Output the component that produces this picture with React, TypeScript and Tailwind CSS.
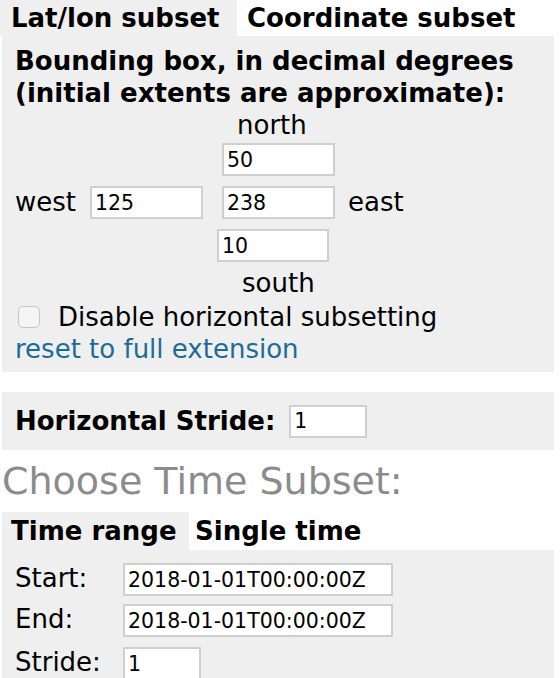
import React from 'react';

const inputCls =
  'h-[33px] border-2 border-[#cfcfcf] bg-white px-[3px] text-[20.5px] text-black outline-none font-["DejaVu_Sans",Verdana,sans-serif]';

function App() {
  return (
    <div className="min-h-[678px] bg-white text-black text-[26px] font-['DejaVu_Sans',Verdana,sans-serif]">
      {/* spatial tabs */}
      <div className="flex h-[36px]">
        <div className="flex h-[36px] w-[237px] items-center bg-[#efefef] pl-[11px] font-bold">Lat/lon subset</div>
        <div className="flex h-[36px] items-center pl-[10px] font-bold">Coordinate subset</div>
      </div>

      <div className="ml-[2px] flex h-[336px] w-[552px] flex-col bg-[#efefef]">
        <div className="px-[13px] pt-[9px] font-bold leading-[32px]">
          Bounding box, in decimal degrees
          <br />
          (initial extents are approximate):
        </div>

        <div className="pl-[235px] leading-[32px]">north</div>
        <div className="mt-[2px] flex pl-[220px]">
          <input className={`${inputCls} w-[113px]`} defaultValue="50" />
        </div>
        <div className="mt-[7px] flex items-center">
          <span className="w-[88px] pl-[13px]">west</span>
          <input className={`${inputCls} w-[113px]`} defaultValue="125" />
          <input className={`${inputCls} ml-[19px] w-[113px]`} defaultValue="238" />
          <span className="pl-[13px]">east</span>
        </div>
        <div className="mt-[7px] flex pl-[215px]">
          <input className={`${inputCls} w-[112px]`} defaultValue="10" />
        </div>
        <div className="mt-[5px] pl-[240px] leading-[32px]">south</div>
        <label className="mt-[2px] flex items-center pl-[16px] leading-[32px]">
          <span className="mr-[18px] inline-block h-[22px] w-[22px] rounded-[5px] border border-[#c6c6c6] bg-[#f5f5f5]" />
          Disable horizontal subsetting
        </label>
        <a href="#" className="block pl-[13px] leading-[32px] text-[#1b6c98]">
          reset to full extension
        </a>
      </div>

      <div className="ml-[2px] mt-[20px] flex h-[58px] w-[552px] items-center bg-[#efefef] pl-[13px]">
        <span className="font-bold">Horizontal Stride:</span>
        <input className={`${inputCls} ml-[14px] w-[78px]`} defaultValue="1" />
      </div>

      <div className="mt-[6px] pl-[2px] text-[38px] leading-[50px] text-[#8b8b8b]">Choose Time Subset:</div>

      <div className="mt-[6px] flex h-[38px]">
        <div className="ml-[2px] flex h-[38px] w-[187px] items-center bg-[#efefef] pl-[9px] font-bold">Time range</div>
        <div className="flex h-[38px] items-center pl-[6px] font-bold">Single time</div>
      </div>

      <div className="ml-[2px] w-[552px] bg-[#efefef] pb-[10px] pl-[13px] pt-[13px]">
        <div className="flex items-start">
          <span className="w-[108px] leading-[30px]">Start:</span>
          <input className={`${inputCls} w-[270px]`} defaultValue="2018-01-01T00:00:00Z" />
        </div>
        <div className="mt-[8px] flex items-start">
          <span className="w-[108px] leading-[30px]">End:</span>
          <input className={`${inputCls} w-[270px]`} defaultValue="2018-01-01T00:00:00Z" />
        </div>
        <div className="mt-[10px] flex items-start">
          <span className="w-[108px] leading-[30px]">Stride:</span>
          <input className={`${inputCls} w-[78px]`} defaultValue="1" />
        </div>
      </div>
    </div>
  );
}

export default App;
